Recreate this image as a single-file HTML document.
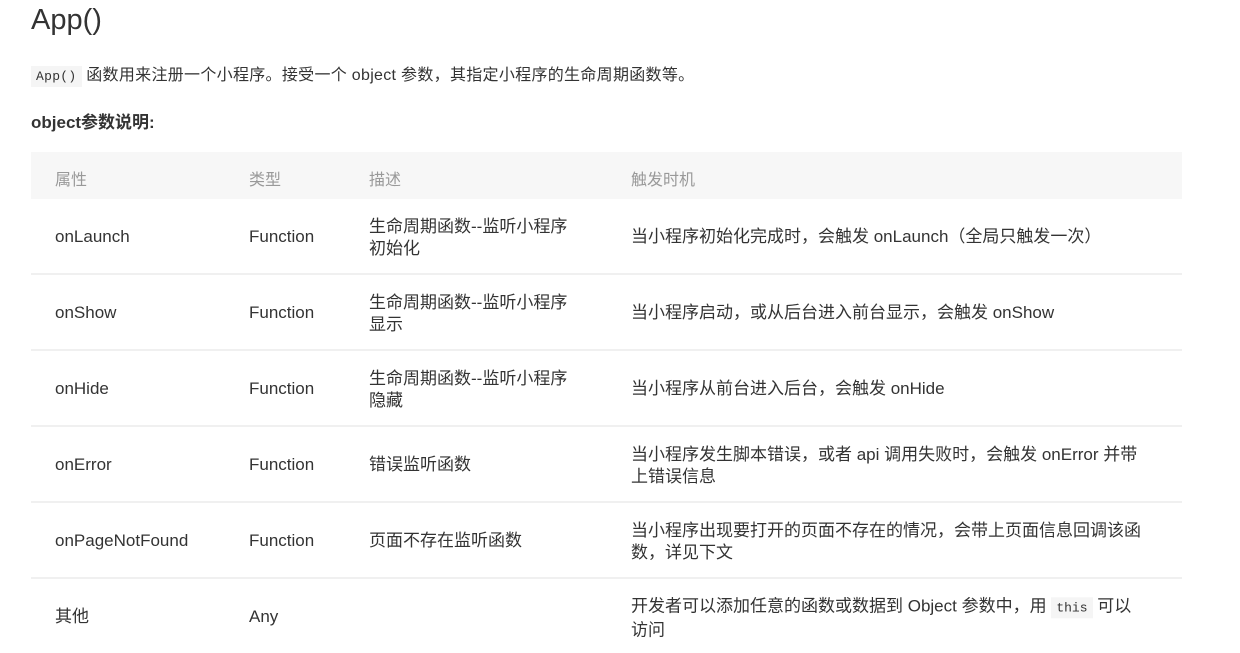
<!DOCTYPE html>
<html><head><meta charset="utf-8"><style>
body{margin:0;width:1240px;height:648px;overflow:hidden;background:#fff;font-family:"Liberation Sans","Noto Sans CJK SC",sans-serif;color:#333;}
.a{position:absolute;white-space:nowrap}
h1{position:absolute;left:31px;top:4px;margin:0;font-weight:normal;font-size:29px;color:#333}
code{font-family:"Liberation Mono",monospace;background:#f5f5f5;font-size:13px;padding:3px 5px;color:#333}
.p{left:31px;top:61px;font-size:16px;letter-spacing:0.3px}
.b{left:31px;top:108px;font-size:17px;font-weight:bold}
.hd{position:absolute;left:31px;top:152px;width:1151px;height:47px;background:#f7f7f7}
.hd span{position:absolute;top:14px;font-size:16px;color:#999}
.r{position:absolute;left:31px;width:1151px;height:74px;border-bottom:2px solid #f0f0f0;font-size:17px;line-height:22px}
.r div{position:absolute;top:50%;transform:translateY(-45%);white-space:nowrap}
.c1{left:24px}.c2{left:218px}.c3{left:338px}.c4{left:600px}
</style></head><body>
<h1>App()</h1>
<div class="a p"><code>App()</code> 函数用来注册一个小程序。接受一个 object 参数，其指定小程序的生命周期函数等。</div>
<div class="a b">object参数说明:</div>
<div class="hd"><span style="left:24px">属性</span><span style="left:218px">类型</span><span style="left:338px">描述</span><span style="left:600px">触发时机</span></div>
<div class="r" style="top:199px"><div class="c1">onLaunch</div><div class="c2">Function</div><div class="c3">生命周期函数--监听小程序<br>初始化</div><div class="c4">当小程序初始化完成时，会触发 onLaunch（全局只触发一次）</div></div>
<div class="r" style="top:275px"><div class="c1">onShow</div><div class="c2">Function</div><div class="c3">生命周期函数--监听小程序<br>显示</div><div class="c4">当小程序启动，或从后台进入前台显示，会触发 onShow</div></div>
<div class="r" style="top:351px"><div class="c1">onHide</div><div class="c2">Function</div><div class="c3">生命周期函数--监听小程序<br>隐藏</div><div class="c4">当小程序从前台进入后台，会触发 onHide</div></div>
<div class="r" style="top:427px"><div class="c1">onError</div><div class="c2">Function</div><div class="c3">错误监听函数</div><div class="c4">当小程序发生脚本错误，或者 api 调用失败时，会触发 onError 并带<br>上错误信息</div></div>
<div class="r" style="top:503px"><div class="c1">onPageNotFound</div><div class="c2">Function</div><div class="c3">页面不存在监听函数</div><div class="c4">当小程序出现要打开的页面不存在的情况，会带上页面信息回调该函<br>数，详见下文</div></div>
<div class="r" style="top:579px;border:none"><div class="c1">其他</div><div class="c2">Any</div><div class="c3"></div><div class="c4">开发者可以添加任意的函数或数据到 Object 参数中，用 <code>this</code> 可以<br>访问</div></div>
</body></html>
